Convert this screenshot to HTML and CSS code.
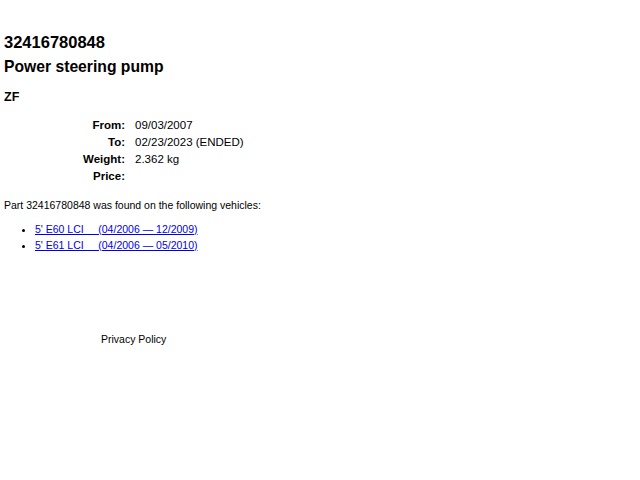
FILE: index.html
```html
<!DOCTYPE html>
<html lang="en">
<head>
    <meta charset="UTF-8">
    <title>32416780848 Power steering pump</title>
    <link rel="stylesheet" href="styles.css">
</head>
<body>

<div class="part">
    <h1>32416780848</h1>
    <h2>Power steering pump</h2>
    <h3>ZF</h3>

    <table class="details">
        <tr><th>From:</th><td>09/03/2007</td></tr>
        <tr><th>To:</th><td>02/23/2023 (ENDED)</td></tr>
        <tr><th>Weight:</th><td>2.362 kg</td></tr>
        <tr><th>Price:</th><td></td></tr>
    </table>

    <p class="found">Part 32416780848 was found on the following vehicles:</p>
    <ul class="vehicles">
        <li><a href="#">5' E60 LCI &nbsp;&nbsp;&nbsp;&nbsp;(04/2006 &mdash; 12/2009)</a></li>
        <li><a href="#">5' E61 LCI &nbsp;&nbsp;&nbsp;&nbsp;(04/2006 &mdash; 05/2010)</a></li>
    </ul>
</div>

<footer>
    <p>Privacy Policy</p>
</footer>

</body>
</html>
```

FILE: styles.css
```css
body {
    font-family: 'Liberation Sans', Arial, sans-serif;
    font-size: 10.5px;
    color: #000;
    background-color: #fff;
    margin: 0;
    padding: 30px 4px 0;
}
h1 {
    font-size: 16.5px;
    margin: 0;
    line-height: 24px;
}
h2 {
    font-size: 15.7px;
    margin: 1px 0 0;
    line-height: 24px;
}
h3 {
    font-size: 12.5px;
    margin: 10px 0 0;
    line-height: 16px;
}
.details {
    border-collapse: collapse;
    margin: 12px 0 0;
    font-size: 11.5px;
}
.details th {
    width: 121px;
    text-align: right;
    padding: 0 10px 0 0;
    line-height: 17px;
}
.details td {
    padding: 0;
    line-height: 17px;
}
.found {
    margin: 12px 0 0;
    line-height: 16px;
}
.vehicles {
    margin: 8px 0 0;
    padding-left: 31px;
    font-size: 10.5px;
    line-height: 16px;
}
.vehicles a {
    color: #0000ee;
}
footer {
    padding: 80px 0 0 97px;
}
footer p {
    margin: 0;
}
```
